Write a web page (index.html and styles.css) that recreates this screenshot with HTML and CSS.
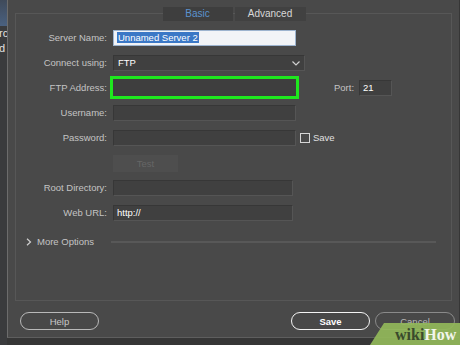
FILE: index.html
```html
<!DOCTYPE html>
<html lang="en">
<head>
  <meta charset="UTF-8">
  <title>Site Setup - Server</title>
  <link rel="stylesheet" href="styles.css">
</head>
<body>
<div id="app">
  <div class="sidebar">
    <div class="sideSel"></div>
    <div class="sideItem">rc</div>
    <div class="sideItem">d</div>
  </div>

  <div class="dialog">
    <div class="panel">
      <div class="tabs">
        <span class="tab tabOn">Basic</span>
        <span class="tab">Advanced</span>
      </div>

      <div class="form">
        <label>Server Name:</label>
        <div class="field"><div class="input inputActive w183"><span class="selText">Unnamed Server 2</span></div></div>

        <label>Connect using:</label>
        <div class="field">
          <div class="input select w192">FTP
            <svg class="chev" width="8" height="5" viewBox="0 0 8 5"><polyline points="0.5,0.5 4,4 7.5,0.5" fill="none" stroke="#cfcfcf" stroke-width="1.2"/></svg>
          </div>
        </div>

        <label>FTP Address:</label>
        <div class="field">
          <div class="input hilite w183"></div>
          <span class="portLabel">Port:</span>
          <div class="input port">21</div>
        </div>

        <label>Username:</label>
        <div class="field"><div class="input w183"></div></div>

        <label>Password:</label>
        <div class="field">
          <div class="input w183"></div>
          <span class="check"></span><span class="checkText">Save</span>
        </div>

        <span></span>
        <div class="field"><button class="testBtn">Test</button></div>

        <label>Root Directory:</label>
        <div class="field"><div class="input w180"></div></div>

        <label>Web URL:</label>
        <div class="field"><div class="input w180">http://</div></div>
      </div>

      <div class="more">
        <svg width="6" height="8" viewBox="0 0 6 8"><polyline points="1,0.8 4.5,4 1,7.2" fill="none" stroke="#cfcfcf" stroke-width="1.2"/></svg>
        <span class="moreText">More Options</span>
        <span class="moreLine"></span>
      </div>
    </div>

    <div class="footer">
      <button class="pill help">Help</button>
      <span class="spacer"></span>
      <button class="pill save">Save</button>
      <button class="pill cancel">Cancel</button>
    </div>
  </div>

  <div class="wiki"><span class="wikiA">wiki</span><span class="wikiB">How</span></div>
</div>
</body>
</html>
```

FILE: styles.css
```css
body {
  margin: 0;
  background-color: #363636;
  font-family: "Liberation Sans", Arial, sans-serif;
  font-size: 9.5px;
}

#app {
  position: relative;
  width: 460px;
  height: 345px;
  display: flex;
  overflow: hidden;
}

.sidebar {
  width: 7px;
  height: 345px;
  background-color: #3a3b3d;
  overflow: hidden;
  color: #e2e2e2;
  font-size: 11px;
}

.sideSel {
  height: 26px;
  background: linear-gradient(#3f4a5a, #4a6180);
}

.sideItem {
  height: 15px;
  line-height: 15px;
  white-space: nowrap;
  margin-left: -1px;
}

.dialog {
  width: 451px;
  height: 337px;
  background-color: #494949;
  border-left: 1px solid #6c6c6c;
  border-bottom: 1px solid #5e5e5e;
  display: flex;
  flex-direction: column;
}

.panel {
  margin: 13px 7px 0 7px;
  height: 286px;
  border: 1px solid #575757;
  display: flex;
  flex-direction: column;
}

.tabs {
  margin-top: -7px;
  height: 14px;
  display: flex;
  justify-content: center;
  gap: 2px;
  margin-left: 1px;
}

.tab {
  width: 71px;
  height: 14px;
  line-height: 14px;
  text-align: center;
  background-color: #414141;
  color: #d8d8d8;
  font-size: 10px;
}

.tabOn {
  width: 70px;
  background-color: #3e3e3e;
  color: #5b93cf;
}

.form {
  margin-top: 4px;
  display: grid;
  grid-template-columns: 91px 1fr;
  grid-auto-rows: 25px;
  column-gap: 6px;
  align-items: center;
}

.form label {
  text-align: right;
  color: #c4c4c4;
}

.field {
  display: flex;
  align-items: center;
}

.input {
  box-sizing: border-box;
  height: 16px;
  line-height: 14px;
  padding-left: 3px;
  background-color: #404040;
  border: 1px solid #373737;
  border-right-color: #555555;
  border-bottom-color: #555555;
  color: #ffffff;
}

.w183 { width: 183px; }
.w192 { width: 192px; }
.w180 { width: 180px; }

.inputActive {
  background-color: #f2f4f7;
  border-color: #9db4cf;
  padding-left: 3px;
}

.selText {
  background-color: #3b78c6;
  color: #ffffff;
  padding: 0 1px;
}

.select {
  display: flex;
  align-items: center;
  justify-content: space-between;
  padding-right: 4px;
  padding-left: 4px;
}

.chev {
  margin-top: 1px;
}

.hilite {
  height: 17px;
  background-color: #3e3e3e;
  border: none;
  box-shadow: 0 0 0 3px #1ee81e;
}

.portLabel {
  margin-left: 38px;
  color: #c4c4c4;
}

.port {
  width: 33px;
  margin-left: 5px;
}

.check {
  box-sizing: border-box;
  width: 10px;
  height: 10px;
  margin-left: 4px;
  border: 1.5px solid #d6d6d6;
}

.checkText {
  margin-left: 3px;
  color: #e0e0e0;
}

.testBtn {
  width: 65px;
  height: 17px;
  margin-top: 1px;
  padding: 0;
  border: none;
  background-color: #4e4e4e;
  color: #666666;
  font-family: inherit;
  font-size: 9.5px;
}

.more {
  margin-top: 8px;
  height: 17px;
  display: flex;
  align-items: center;
  padding-left: 10px;
}

.moreText {
  margin-left: 5px;
  color: #c4c4c4;
  width: 74px;
}

.moreLine {
  flex: 1;
  height: 2px;
  margin-right: 15px;
  background-color: #585858;
}

.footer {
  margin-top: 11px;
  display: flex;
  padding: 0 4px 0 12px;
}

.spacer {
  flex: 1;
}

.pill {
  box-sizing: border-box;
  width: 79px;
  height: 18px;
  border-radius: 9px;
  background-color: #484848;
  font-family: inherit;
  font-size: 9.5px;
  padding: 0;
}

.help {
  border: 1px solid #b9b9b9;
  color: #c8c8c8;
}

.save {
  border: 1.5px solid #f4f4f4;
  color: #ffffff;
  font-weight: bold;
}

.cancel {
  width: 80px;
  margin-left: 5px;
  border: 1px solid #8a8a8a;
  color: #b8b8b8;
}

/* wikiHow badge over the corner */
.wiki {
  position: absolute;
  right: 0;
  bottom: 0;
  width: 90px;
  height: 22px;
  padding-left: 25px;
  box-sizing: border-box;
  background-color: rgba(146, 184, 90, 0.92);
  clip-path: polygon(14px 0, 100% 0, 100% 100%, 0 100%);
  font-family: "Liberation Serif", serif;
  font-weight: bold;
  font-size: 16px;
  line-height: 24px;
}

.wikiA {
  color: #3a4a2c;
}

.wikiB {
  color: #f2f5ec;
}
```
